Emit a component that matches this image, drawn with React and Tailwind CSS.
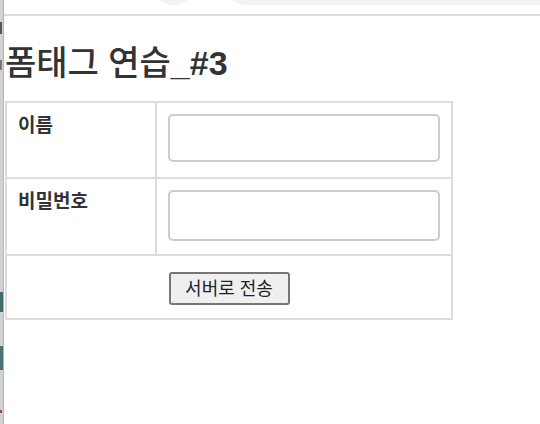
const font = { fontFamily: '"Liberation Sans", "Noto Sans CJK KR", sans-serif' };

function Row({ label, rowH, inputH, type }) {
  return (
    <div className={`flex ${rowH} border-b-2 border-[#dddddd]`}>
      <div className="w-[150px] border-r-2 border-[#dddddd] pl-[11px] pt-[9px] text-[19px] leading-[27px] font-bold text-[#333333]">
        {label}
      </div>
      <div className="flex-1 pl-[11px] pt-[11px]">
        <input
          type={type}
          className={`block w-[272px] ${inputH} rounded-[5px] border-2 border-[#cccccc] bg-white`}
        />
      </div>
    </div>
  );
}

export default function App() {
  return (
    <div className="flex w-[540px] h-[424px] overflow-hidden bg-white text-[#333333]" style={font}>
      {/* left window edge */}
      <div className="w-[4px] shrink-0 flex flex-col bg-[#d2d2d2] border-r border-[#b4b4b4]">
        <div className="mt-[22px] h-[12px] w-[2px] bg-[#555555]" />
        <div className="mt-[26px] h-[10px] w-[2px] bg-[#777777]" />
        <div className="mt-[222px] h-[20px] w-[3px] bg-[#3f6b6b]" />
        <div className="mt-[34px] h-[24px] w-[3px] bg-[#4a7474]" />
        <div className="mt-[40px] h-[3px] w-[2px] bg-[#8a4a4a]" />
      </div>

      <div className="flex-1 flex flex-col">
        {/* browser chrome remnant */}
        <div className="h-[16px] border-b-2 border-[#dcdcdc] flex items-start overflow-hidden">
          <div className="ml-[146px] w-[46px] h-[46px] -mt-[41px] rounded-full bg-[#f1f3f4]" />
          <div className="ml-[28px] flex-1 h-[46px] -mt-[41px] rounded-bl-[22px] bg-[#f1f3f4]" />
        </div>

        <h1 className="ml-[1px] mt-[26px] text-[34px] leading-[42px] font-medium text-[#333333]">
          폼태그 연습<span className="font-bold">_#3</span>
        </h1>

        <div className="ml-[1px] mt-[17px] w-[448px] border-2 border-[#dddddd]">
          <Row label="이름" rowH="h-[76px]" inputH="h-[48px]" type="text" />
          <Row label="비밀번호" rowH="h-[77px]" inputH="h-[51px]" type="password" />
          <div className="h-[62px] flex justify-center pt-[16px]">
            <button className="h-[33px] w-[121px] rounded-[3px] border-2 border-[#767676] bg-[#efefef] text-[18px] leading-none text-[#222222]">
              서버로 전송
            </button>
          </div>
        </div>
      </div>
    </div>
  );
}
